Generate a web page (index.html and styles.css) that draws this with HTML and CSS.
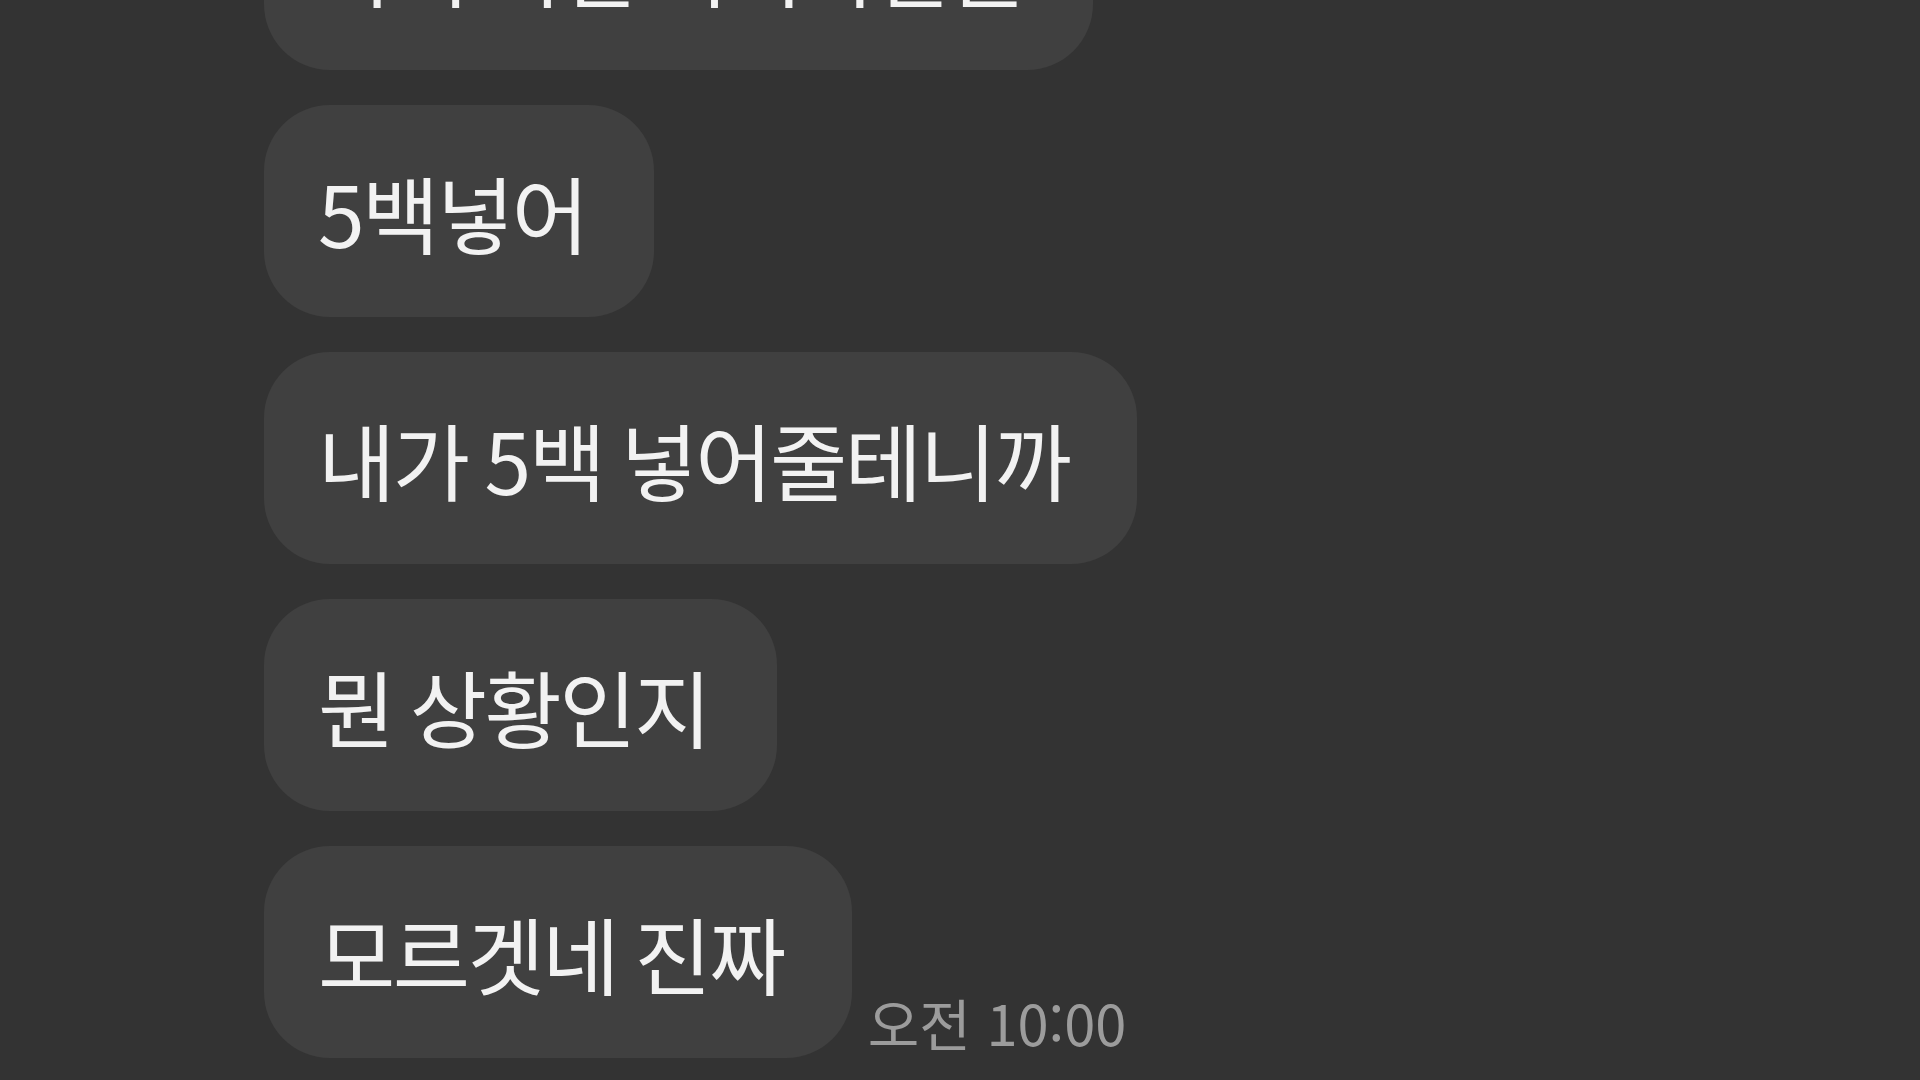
FILE: index.html
```html
<!DOCTYPE html>
<html lang="ko">
<head>
    <meta charset="UTF-8">
    <meta content="width=device-width, initial-scale=1.0" name="viewport">
    <title>채팅</title>
    <link rel="stylesheet" href="styles.css">
</head>
<body>
<div id="chat">
    <div class="row">
        <div class="bubble">아니 이걸 어디다말을</div>
    </div>
    <div class="row">
        <div class="bubble">5백넣어</div>
    </div>
    <div class="row">
        <div class="bubble">내가 5백 넣어줄테니까</div>
    </div>
    <div class="row">
        <div class="bubble">뭔 상황인지</div>
    </div>
    <div class="row">
        <div class="bubble">모르겟네 진짜</div>
        <span class="time">오전 10:00</span>
    </div>
</div>
</body>
</html>
```

FILE: styles.css
```css
html, body {
    margin: 0;
    height: 100%;
    background: #333333;
    overflow: hidden;
}

#chat {
    display: flex;
    flex-direction: column;
    gap: 35px;
    margin-top: -142px;
    padding-left: 264px;
    font-family: "Noto Sans CJK KR", sans-serif;
}

.row {
    display: flex;
    align-items: flex-end;
}

.bubble {
    display: flex;
    align-items: center;
    height: 212px;
    padding: 0 68px 0 54px;
    box-sizing: border-box;
    border-radius: 66px;
    background: #404040;
    color: #f2f2f2;
    font-size: 84px;
    letter-spacing: -2.5px;
    word-spacing: -4px;
    white-space: nowrap;
}

.time {
    margin: 0 0 -4px 16px;
    color: #9c9c9c;
    font-size: 56px;
    letter-spacing: 0;
    white-space: nowrap;
}
```
